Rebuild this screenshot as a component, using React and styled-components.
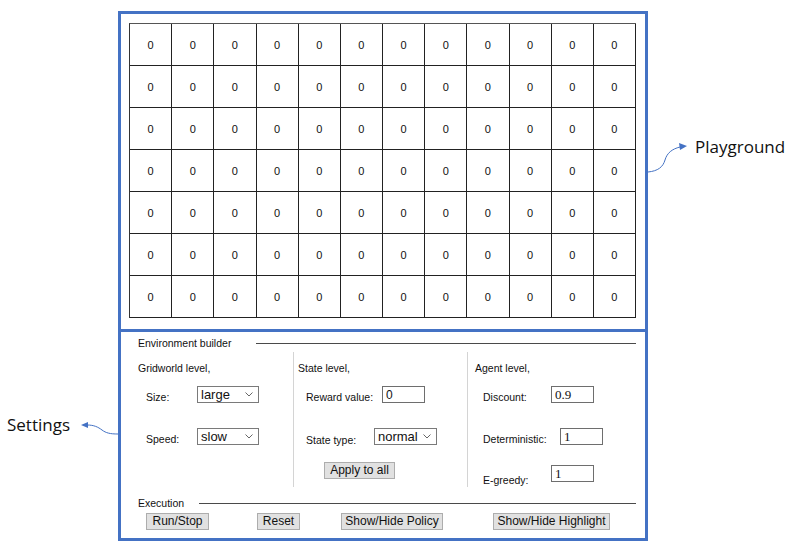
import React from 'react';
import styled, { createGlobalStyle } from 'styled-components';

const Global = createGlobalStyle`
  html, body { margin: 0; padding: 0; background: #fff; }
  body { font-family: "Liberation Sans", Arial, sans-serif; color: #111; }
  * { box-sizing: border-box; }
`;

const BLUE = '#4472c4';

const Page = styled.div`
  width: 800px;
  height: 560px;
  display: flex;
  align-items: flex-start;
  padding-top: 11px;
`;

const LeftNote = styled.div`
  width: 118px;
  padding: 402px 0 0 7px;
  display: flex;
  align-items: flex-start;
`;

const RightNote = styled.div`
  flex: 1;
  padding-top: 124px;
  display: flex;
  align-items: flex-start;
`;

const NoteText = styled.span`
  font-family: "Open Sans", "Noto Sans", sans-serif;
  font-size: 17px;
  line-height: 23px;
  color: #111;
  margin-left: ${p => p.$ml || 0}px;
`;

const NoteArrow = styled.svg`
  display: block;
  margin-top: ${p => p.$mt || 0}px;
  flex: none;
`;

const Board = styled.div`
  width: 530px;
  height: 530px;
  border: 3px solid ${BLUE};
  display: flex;
  flex-direction: column;
`;

const Playground = styled.div`
  padding: 9px 9px 11px 8px;
`;

const Grid = styled.div`
  width: 507px;
  display: grid;
  grid-template-columns: repeat(12, 1fr);
  grid-auto-rows: 42px;
  border-top: 1px solid #555;
  border-left: 1px solid #333;
`;

const Cell = styled.div`
  border-right: 1px solid #222;
  border-bottom: 1px solid #222;
  display: flex;
  align-items: center;
  justify-content: center;
  font-size: 11px;
  color: #111;
`;

const Settings = styled.div`
  flex: 1;
  border-top: 3px solid ${BLUE};
  padding: 4px 9px 8px 17px;
  display: flex;
  flex-direction: column;
  font-size: 10.5px;
`;

const Legend = styled.div`
  display: flex;
  align-items: center;
  height: 14px;
  line-height: 14px;
  margin-top: ${p => p.$mt || 0}px;
`;

const LegendText = styled.span`
  font-size: 10.5px;
  color: #111;
`;

const LegendLine = styled.div`
  flex: 1;
  height: 1px;
  background: #4a4a4a;
  margin-left: ${p => p.$gap}px;
`;

const Columns = styled.div`
  margin-top: 2px;
  height: 135px;
  display: grid;
  grid-template-columns: 155px 174px 1fr;
`;

const Column = styled.div`
  padding-top: 9px;
  padding-left: ${p => p.$pad || 0}px;
  border-left: ${p => (p.$sep ? '1px solid #d4d4d4' : 'none')};
  display: flex;
  flex-direction: column;
  align-items: flex-start;
`;

const Heading = styled.div`
  font-size: 10.5px;
  line-height: 14px;
  color: #111;
`;

const Row = styled.div`
  display: flex;
  align-items: flex-start;
  padding-left: 8px;
  margin-top: ${p => p.$mt}px;
`;

const Label = styled.span`
  width: ${p => p.$w}px;
  padding-top: ${p => p.$pt || 4}px;
  font-size: 10.5px;
  line-height: 14px;
  color: #111;
  flex: none;
`;

const SelectWrap = styled.div`
  position: relative;
  width: ${p => p.$w}px;
  height: 17px;
`;

const Select = styled.select`
  appearance: none;
  -webkit-appearance: none;
  width: 100%;
  height: 100%;
  border: 1px solid #7a7a7a;
  border-radius: 0;
  background: #fff;
  font-family: "Liberation Sans", Arial, sans-serif;
  font-size: 13px;
  line-height: 15px;
  color: #111;
  padding: 0 0 0 3px;
  margin: 0;
  outline: none;
`;

const Chevron = styled.svg`
  position: absolute;
  right: 6px;
  top: 6px;
  pointer-events: none;
`;

const TextInput = styled.input`
  width: 43px;
  height: 17px;
  border: 1px solid #6e6e6e;
  border-radius: 0;
  padding: 0 0 0 3px;
  margin: 0;
  background: #fff;
  font-family: ${p => (p.$serif ? '"Liberation Serif", "Times New Roman", serif' : '"Liberation Sans", Arial, sans-serif')};
  font-size: ${p => (p.$serif ? 13 : 12)}px;
  color: #111;
  outline: none;
`;

const Button = styled.button`
  width: ${p => p.$w}px;
  height: 17px;
  margin: 0 0 0 ${p => p.$ml || 0}px;
  padding: 0;
  border: 1px solid #adadad;
  border-radius: 0;
  background: #e1e1e1;
  font-family: "Liberation Sans", Arial, sans-serif;
  font-size: 12px;
  line-height: 15px;
  color: #111;
  flex: none;
`;

const ButtonRow = styled.div`
  display: flex;
  margin-top: 3px;
`;

const ApplyRow = styled.div`
  margin-top: ${p => p.$mt}px;
  padding-left: 26px;
`;

const Dropdown = ({ w, value, options }) => (
  <SelectWrap $w={w}>
    <Select defaultValue={value}>
      {options.map(o => (
        <option key={o} value={o}>{o}</option>
      ))}
    </Select>
    <Chevron width="8" height="5" viewBox="0 0 8 5">
      <path d="M0.5 0.5 L4 4 L7.5 0.5" fill="none" stroke="#666" strokeWidth="1" />
    </Chevron>
  </SelectWrap>
);

export default function App() {
  const cells = Array.from({ length: 84 }, (_, i) => i);
  return (
    <>
      <Global />
      <Page>
        <LeftNote>
          <NoteText>Settings</NoteText>
          <NoteArrow $mt={1} width="48" height="24" viewBox="0 0 48 24">
            <path d="M48 20 C 40 20, 36 19, 32 16 C 28 13, 24 11, 17 11" fill="none" stroke={BLUE} strokeWidth="1" />
            <polygon points="11,11 18,8 18,14" fill={BLUE} />
          </NoteArrow>
        </LeftNote>
        <Board>
          <Playground>
            <Grid>
              {cells.map(i => (
                <Cell key={i}>0</Cell>
              ))}
            </Grid>
          </Playground>
          <Settings>
            <Legend>
              <LegendText>Environment builder</LegendText>
              <LegendLine $gap={25} />
            </Legend>
            <Columns>
              <Column>
                <Heading>Gridworld level,</Heading>
                <Row $mt={11}>
                  <Label $w={51}>Size:</Label>
                  <Dropdown w={62} value="large" options={['small', 'medium', 'large']} />
                </Row>
                <Row $mt={24}>
                  <Label $w={51}>Speed:</Label>
                  <Dropdown w={62} value="slow" options={['slow', 'normal', 'fast']} />
                </Row>
              </Column>
              <Column $sep $pad={4}>
                <Heading>State level,</Heading>
                <Row $mt={11}>
                  <Label $w={76}>Reward value:</Label>
                  <TextInput defaultValue="0" />
                </Row>
                <Row $mt={24}>
                  <Label $w={68} $pt={5}>State type:</Label>
                  <Dropdown w={63} value="normal" options={['normal', 'wall', 'terminal']} />
                </Row>
                <ApplyRow $mt={15}>
                  <Button $w={71}>Apply to all</Button>
                </ApplyRow>
              </Column>
              <Column $sep $pad={7}>
                <Heading>Agent level,</Heading>
                <Row $mt={11}>
                  <Label $w={68}>Discount:</Label>
                  <TextInput $serif defaultValue="0.9" />
                </Row>
                <Row $mt={24}>
                  <Label $w={77}>Deterministic:</Label>
                  <TextInput $serif defaultValue="1" />
                </Row>
                <Row $mt={19}>
                  <Label $w={68} $pt={8}>E-greedy:</Label>
                  <TextInput $serif defaultValue="1" />
                </Row>
              </Column>
            </Columns>
            <Legend $mt={9}>
              <LegendText>Execution</LegendText>
              <LegendLine $gap={15} />
            </Legend>
            <ButtonRow>
              <Button $w={63} $ml={8}>Run/Stop</Button>
              <Button $w={43} $ml={48}>Reset</Button>
              <Button $w={102} $ml={41}>Show/Hide Policy</Button>
              <Button $w={117} $ml={50}>Show/Hide Highlight</Button>
            </ButtonRow>
          </Settings>
        </Board>
        <RightNote>
          <NoteArrow $mt={5} width="44" height="36" viewBox="0 0 44 36">
            <path d="M0 32 C 10 31, 15 27, 17 20 C 19 13, 24 9, 32 7" fill="none" stroke={BLUE} strokeWidth="1" />
            <polygon points="39,6 31,3 32,10" fill={BLUE} />
          </NoteArrow>
          <NoteText $ml={3}>Playground</NoteText>
        </RightNote>
      </Page>
    </>
  );
}
